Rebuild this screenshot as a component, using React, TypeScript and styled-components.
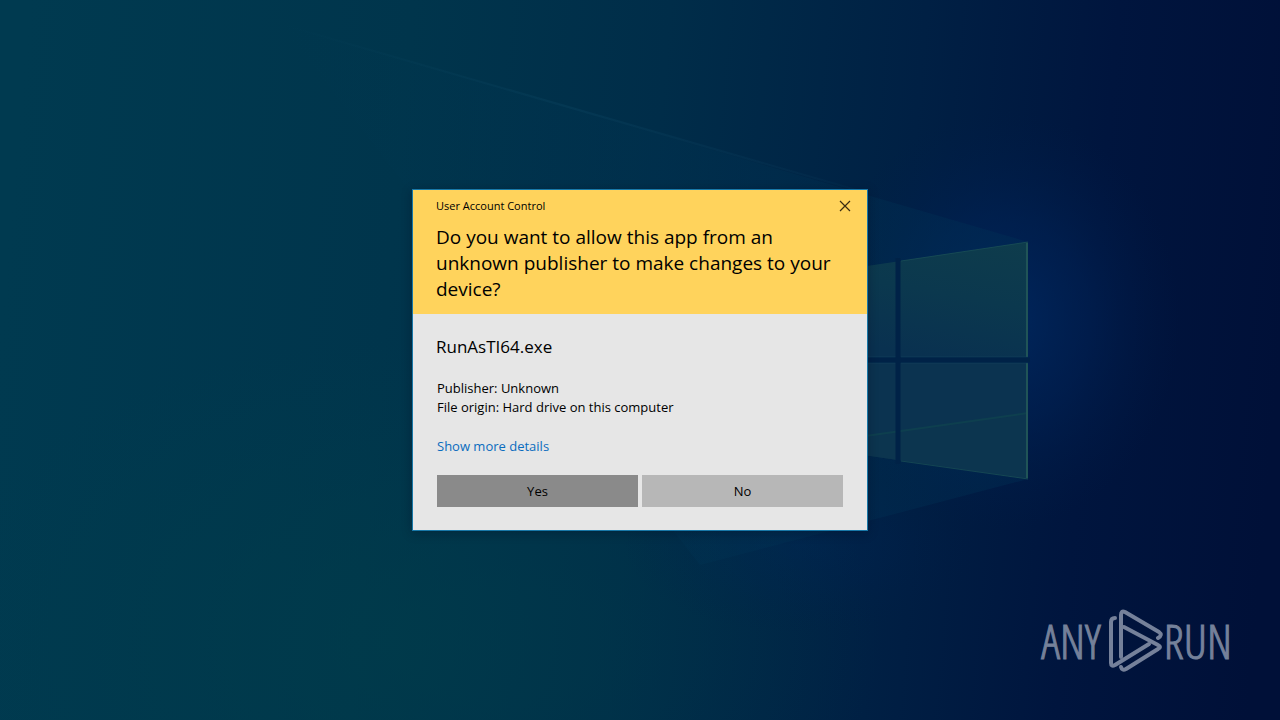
import React from "react";
import styled, { createGlobalStyle } from "styled-components";

const GlobalStyle = createGlobalStyle`
  * { box-sizing: border-box; }
  body {
    margin: 0;
    background: #001840;
    font-family: "Open Sans", "Noto Sans", sans-serif;
    color: #000;
  }
  h1, h2, p { margin: 0; font-weight: 400; }
`;

const Desktop = styled.main`
  position: relative;
  min-height: 100vh;
  display: flex;
  align-items: center;
  justify-content: center;
  overflow: hidden;
`;

const WallpaperArt = styled.svg`
  position: absolute;
  inset: 0;
  width: 100%;
  height: 100%;
`;

const Dialog = styled.section`
  position: relative;
  width: 456px;
  max-width: 100%;
  border: 1px solid #1878a8;
  background: #e6e6e6;
  box-shadow: 0 2px 10px rgba(0, 10, 30, 0.3);
`;

const Header = styled.header`
  padding: 0 23px 12px;
  background: #ffd35c;
`;

const TitleRow = styled.div`
  display: flex;
  align-items: center;
  justify-content: space-between;
  height: 32px;
`;

const Caption = styled.span`
  font-size: 11px;
  line-height: 16px;
`;

const CloseButton = styled.button`
  display: flex;
  align-items: center;
  justify-content: center;
  width: 44px;
  height: 32px;
  margin-right: -23px;
  padding: 0;
  border: 0;
  background: transparent;
`;

const Question = styled.h1`
  padding-top: 2px;
  font-size: 19px;
  line-height: 26px;
`;

const Body = styled.div`
  padding: 21px 24px 23px;
`;

const FileName = styled.h2`
  margin-left: -1px;
  font-size: 17px;
  line-height: 24px;
`;

const Facts = styled.div`
  padding: 20px 0;
  font-size: 13px;
  line-height: 19px;
`;

const DetailsLink = styled.a`
  display: block;
  width: fit-content;
  color: #0a6cbe;
  font-size: 13px;
  line-height: 19px;
  text-decoration: none;
`;

const Actions = styled.div`
  display: grid;
  grid-template-columns: 1fr 1fr;
  gap: 4px;
  padding-top: 19px;
`;

const ActionButton = styled.button<{ $strong?: boolean }>`
  height: 32px;
  padding: 0;
  border: 0;
  background: ${(p) => (p.$strong ? "#8a8a8a" : "#b7b7b7")};
  color: #000;
  font-family: inherit;
  font-size: 13px;
`;

const Brand = styled.div`
  position: absolute;
  right: 48px;
  bottom: 46px;
  display: flex;
  align-items: center;
  color: #75819a;
  font-family: "Open Sans Condensed Light", "Open Sans Condensed", "Roboto Condensed", sans-serif;
  font-size: 47px;
  font-weight: 300;
  line-height: 66px;
  -webkit-text-stroke: 1px currentColor;
`;

const Mark = styled.svg`
  margin-left: 7px;
`;

function Wallpaper() {
  return (
    <WallpaperArt viewBox="0 0 1280 720" preserveAspectRatio="xMidYMid slice" aria-hidden="true">
      <defs>
        <linearGradient id="base" x1="0" y1="0.45" x2="1" y2="0.5">
          <stop offset="0" stopColor="#003a50" />
          <stop offset="0.3" stopColor="#00354c" />
          <stop offset="0.5" stopColor="#002d49" />
          <stop offset="0.7" stopColor="#002044" />
          <stop offset="0.85" stopColor="#00153e" />
          <stop offset="1" stopColor="#001038" />
        </linearGradient>
        <radialGradient id="glow">
          <stop offset="0" stopColor="#002860" stopOpacity="0.9" />
          <stop offset="0.5" stopColor="#002358" stopOpacity="0.5" />
          <stop offset="1" stopColor="#001c48" stopOpacity="0" />
        </radialGradient>
        <radialGradient id="teal">
          <stop offset="0" stopColor="#003e4a" stopOpacity="0.6" />
          <stop offset="1" stopColor="#003e4a" stopOpacity="0" />
        </radialGradient>
        <linearGradient id="beam" x1="0" x2="1">
          <stop offset="0" stopColor="#003c58" stopOpacity="0" />
          <stop offset="0.6" stopColor="#003656" stopOpacity="0.25" />
          <stop offset="1" stopColor="#003256" stopOpacity="0.35" />
        </linearGradient>
        <linearGradient id="pane" x1="1" y1="0" x2="0.6" y2="1">
          <stop offset="0" stopColor="#0e3c4c" />
          <stop offset="0.5" stopColor="#0b384e" />
          <stop offset="1" stopColor="#093150" />
        </linearGradient>
        <linearGradient id="ray" x1="0" x2="1">
          <stop offset="0" stopColor="#1a6080" stopOpacity="0" />
          <stop offset="0.5" stopColor="#1a6080" stopOpacity="0.16" />
          <stop offset="1" stopColor="#1a6080" stopOpacity="0.06" />
        </linearGradient>
      </defs>
      <rect width="1280" height="720" fill="url(#base)" />
      <ellipse cx="400" cy="640" rx="480" ry="300" fill="url(#teal)" />
      <ellipse cx="1000" cy="320" rx="180" ry="210" fill="url(#glow)" />
      <ellipse cx="800" cy="545" rx="180" ry="90" fill="url(#glow)" opacity="0.3" />
      <path d="M280 24 1028 242V479L700 565Z" fill="url(#beam)" />
      <path d="M280 24 860 191" stroke="url(#ray)" strokeWidth="2" />
      <path d="M780 279 1028 242V479L780 443Z" fill="#002b4c" />
      <path d="M780 279 1028 242V357H780Z" fill="url(#pane)" />
      <path d="M780 363H1028V479L780 443Z" fill="#0b3350" />
      <path d="M780 448 1028 413V479L780 443Z" fill="#0d384e" opacity="0.5" />
      <path d="M780 448 1028 413" stroke="#10474f" strokeWidth="2" opacity="0.6" />
      <path d="M901 261 1028 242M901 461 1028 479" stroke="#1d5358" strokeWidth="1" opacity="0.7" />
      <path d="M1027 243V357M1027 363V478" stroke="#205457" strokeWidth="2" />
      <path d="M868 357H896M901 357H1028M868 363H896M901 363H1028" stroke="#174561" strokeWidth="1" opacity="0.6" />
      <path d="M780 360H1030M898 258V464" stroke="#002247" strokeWidth="5" />
    </WallpaperArt>
  );
}

function PlayMark() {
  return (
    <Mark width="56" height="64" viewBox="0 0 56 64" fill="none" stroke="currentColor" strokeWidth="4" strokeLinecap="round" strokeLinejoin="round" aria-hidden="true">
      <path d="M7 9Q3 9 3 13V54Q3 58 7 56L41 35" />
      <path d="M13 48V6Q13 1 17 3L51 23Q55 26 50 29" />
      <path d="M16 18 50 36Q54 38 50 40L18 60Q14 62 13 58" />
    </Mark>
  );
}

export default function App() {
  return (
    <Desktop>
      <GlobalStyle />
      <Wallpaper />
      <Dialog role="dialog" aria-labelledby="question">
        <Header>
          <TitleRow>
            <Caption>User Account Control</Caption>
            <CloseButton aria-label="Close">
              <svg width="12" height="12" viewBox="0 0 12 12" fill="none" stroke="#3a2c12" strokeWidth="1.2">
                <path d="M1 1 11 11M11 1 1 11" />
              </svg>
            </CloseButton>
          </TitleRow>
          <Question id="question">
            Do you want to allow this app from an unknown publisher to make changes to your device?
          </Question>
        </Header>
        <Body>
          <FileName>RunAsTI64.exe</FileName>
          <Facts>
            <p>Publisher: Unknown</p>
            <p>File origin: Hard drive on this computer</p>
          </Facts>
          <DetailsLink href="#details">Show more details</DetailsLink>
          <Actions>
            <ActionButton $strong>Yes</ActionButton>
            <ActionButton>No</ActionButton>
          </Actions>
        </Body>
      </Dialog>
      <Brand>
        <span>ANY</span>
        <PlayMark />
        <span>RUN</span>
      </Brand>
    </Desktop>
  );
}
